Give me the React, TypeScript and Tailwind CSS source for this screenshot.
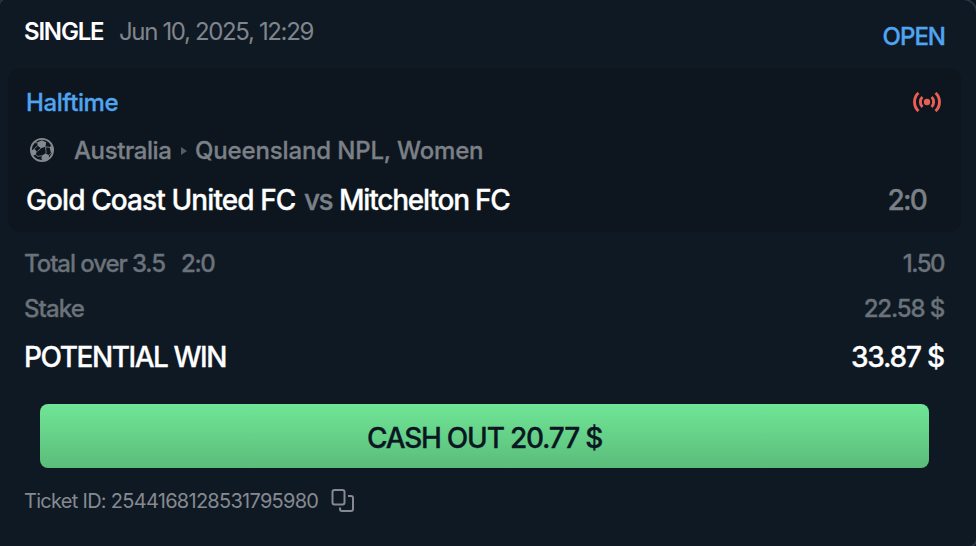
import React from "react";

const BallIcon: React.FC = () => (
  <svg width="24" height="24" viewBox="0 0 24 24" fill="none" className="relative -top-px text-[#868a90]">
    <circle cx="12" cy="12" r="11.1" stroke="currentColor" strokeWidth="1.8" />
    <g fill="currentColor">
      <path d="M7.200 4.600l4.600-2.300 4.400 2-.7 4.500-4.600 1.400-3.200-2.400z" />
      <path d="M1.200 12.800l3-2 2.600 2.800-1 3.200-3.400.6z" />
      <path d="M11.800 17.800l3.800-2.600 3.400 2-.2 3.600-4 2.400-3.400-1.900z" />
      <path d="M19.600 9.400l1.600-2.200 1.600 3.200v4l-1.800.6z" />
    </g>
    <path
      d="M7.200 4.600L4.600 4.800M4.200 10.800l3.500-3.200M15.500 8.800l4.100.6M21 15l-2 2.200M5.800 16.800l2 1.600 4-.6M10.900 10.200l-3.300 3.200M15.600 9l.6 6"
      stroke="currentColor"
      strokeWidth="1"
      strokeOpacity="0.8"
    />
  </svg>
);

const LiveIcon: React.FC = () => (
  <svg width="28" height="20" viewBox="0 0 28 20" fill="none" stroke="#ea5f55" strokeWidth="2.900" className="relative -top-px">
    <circle cx="14" cy="10" r="3.200" fill="#ea5f55" stroke="none" />
    <path d="M9.400 5c-2.700 2.500-2.700 7.500 0 10M18.600 5c2.700 2.500 2.700 7.500 0 10" />
    <path d="M5.500 1c-5.300 4.500-5.300 13.500 0 18M22.500 1c5.300 4.500 5.300 13.500 0 18" />
  </svg>
);

const CopyIcon: React.FC = () => (
  <svg width="24" height="24" viewBox="0 0 24 24" fill="none" stroke="#868a90" strokeWidth="2">
    <rect x="1.500" y="1" width="12" height="14.500" rx="2" />
    <path d="M17 7H20a2 2 0 0 1 2 2v11a2 2 0 0 1-2 2h-9a2 2 0 0 1-2-2v-1.500" />
  </svg>
);

export default function App() {
  return (
    <div className="h-[546px] w-[976px] overflow-hidden bg-[#0c141d] font-['Inter',sans-serif] text-2xl leading-8 whitespace-nowrap">
      <div className="h-full rounded-tl-[5px] rounded-tr-[13px] rounded-br-[7px] bg-[#0f1924] pr-[15px] pl-2 shadow-[0_0_0_1.5px_#2c3947]">
        <div className="flex h-[68px] items-start justify-between pr-4 pl-4">
          <div className="flex pt-4">
            <span className="w-[95px] font-semibold tracking-[-1.200px] text-white">SINGLE</span>
            <span className="tracking-[-1.350px] text-[#80858b]">Jun 10, 2025, 12:29</span>
          </div>
          <span className="pt-[21px] font-medium tracking-[-1px] text-[#50a5f1] [-webkit-text-stroke:0.3px]">OPEN</span>
        </div>

        <div className="h-[164px] rounded-xl bg-[#0d161f] pt-[19px] pr-5 pl-[18px] [-webkit-text-stroke:0.3px]">
          <div className="flex items-center justify-between">
            <span className="font-medium tracking-[-0.400px] text-[#50a5f1]">Halftime</span>
            <LiveIcon />
          </div>
          <div className="mt-4 flex items-center pl-1 font-medium text-[#7b8087]">
            <BallIcon />
            <span className="ml-5 w-[107px] tracking-[-0.400px]">Australia</span>
            <svg width="6" height="8" viewBox="0 0 6 8" fill="#555c64" className="mr-2">
              <path d="M0 0l6 4-6 4z" />
            </svg>
            <span className="tracking-[-0.150px]">Queensland NPL, Women</span>
          </div>
          <div className="mt-[17px] flex items-center justify-between pr-[15px] text-[28px] font-medium text-[#7b8087]">
            <div className="flex text-white">
              <span className="w-[278px] tracking-[-0.900px]">Gold Coast United FC</span>
              <span className="w-[35px] tracking-[-1.500px] text-[#7b8087]">vs</span>
              <span className="tracking-[-1.200px]">Mitchelton FC</span>
            </div>
            <span className="tracking-[-1.800px]">2:0</span>
          </div>
        </div>

        <div className="px-4 pt-4 font-medium text-[#6b7279] [-webkit-text-stroke:0.3px]">
          <div className="flex justify-between">
            <div className="flex">
              <span className="w-[157px] tracking-[-1.080px]">Total over 3.5</span>
              <span className="tracking-[-1.400px]">2:0</span>
            </div>
            <span className="mr-px tracking-[-1.500px]">1.50</span>
          </div>
          <div className="mt-[13px] flex justify-between">
            <span className="tracking-[-0.900px]">Stake</span>
            <span className="mr-px tracking-[-1.150px]">22.58 $</span>
          </div>
          <div className="mt-4 flex justify-between text-[28px] text-white">
            <span className="tracking-[-1.450px]">POTENTIAL WIN</span>
            <span className="mr-px tracking-[-1.200px]">33.87 $</span>
          </div>
        </div>

        <button className="mt-[31px] ml-8 flex h-16 w-[889px] items-center justify-center rounded-lg bg-linear-to-b from-[#70e696] to-[#5bbc7a] pt-[3px] text-[28px] font-medium text-[#0a1622] [-webkit-text-stroke:0.3px]">
          <span className="tracking-[-1.220px]">CASH OUT 20.77 $</span>
        </button>

        <div className="mt-[17px] flex items-center pl-4 text-xl leading-8 text-[#868a90]">
          <span className="w-[307px] tracking-[-0.720px]">Ticket ID: 2544168128531795980</span>
          <CopyIcon />
        </div>
      </div>
    </div>
  );
}
